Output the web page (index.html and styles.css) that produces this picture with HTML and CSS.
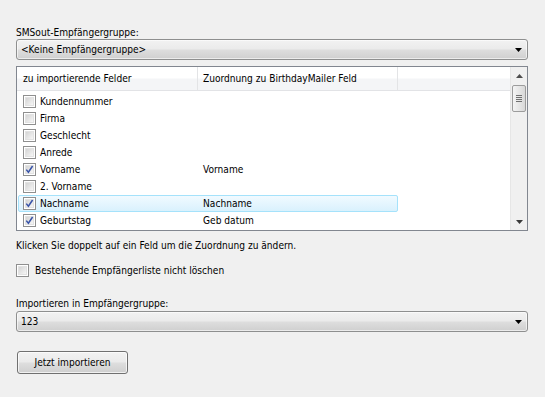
FILE: index.html
```html
<!DOCTYPE html>
<html>
<head>
<meta charset="utf-8">
<link rel="stylesheet" href="styles.css">
</head>
<body>
<div class="page">
  <div class="label first">SMSout-Empfängergruppe:</div>
  <div class="combo">
    <span class="combo-text">&lt;Keine Empfängergruppe&gt;</span>
    <svg class="combo-arrow" width="7" height="4" viewBox="0 0 7 4"><path d="M0 0H7L3.5 4Z" fill="#000"/></svg>
  </div>

  <div class="list">
    <div class="list-main">
      <div class="list-head">
        <div class="hcol c1">zu importierende Felder</div>
        <div class="hcol c2">Zuordnung zu BirthdayMailer Feld</div>
        <div class="hcol c3"></div>
      </div>
      <div class="rows">
        <div class="row"><div class="c1 cell"><span class="cb"></span>Kundennummer</div><div class="c2 cell"></div></div>
        <div class="row"><div class="c1 cell"><span class="cb"></span>Firma</div><div class="c2 cell"></div></div>
        <div class="row"><div class="c1 cell"><span class="cb"></span>Geschlecht</div><div class="c2 cell"></div></div>
        <div class="row"><div class="c1 cell"><span class="cb"></span>Anrede</div><div class="c2 cell"></div></div>
        <div class="row"><div class="c1 cell"><span class="cb checked"><svg width="9" height="9" viewBox="0 0 9 9"><path d="M1.3 4.6L3.4 7.2L7.6 1" fill="none" stroke="#3853a8" stroke-width="1.5"/></svg></span>Vorname</div><div class="c2 cell">Vorname</div></div>
        <div class="row"><div class="c1 cell"><span class="cb"></span>2. Vorname</div><div class="c2 cell"></div></div>
        <div class="row selected"><div class="c1 cell"><span class="cb checked"><svg width="9" height="9" viewBox="0 0 9 9"><path d="M1.3 4.6L3.4 7.2L7.6 1" fill="none" stroke="#3853a8" stroke-width="1.5"/></svg></span>Nachname</div><div class="c2 cell">Nachname</div></div>
        <div class="row"><div class="c1 cell"><span class="cb checked"><svg width="9" height="9" viewBox="0 0 9 9"><path d="M1.3 4.6L3.4 7.2L7.6 1" fill="none" stroke="#3853a8" stroke-width="1.5"/></svg></span>Geburtstag</div><div class="c2 cell">Geb datum</div></div>
      </div>
    </div>
    <div class="vscroll">
      <div class="sbtn"><svg width="7" height="4" viewBox="0 0 7 4"><path d="M3.5 0L7 4H0Z" fill="#4d4d4d"/></svg></div>
      <div class="thumb"><span class="grip"></span><span class="grip"></span><span class="grip"></span><span class="grip"></span></div>
      <div class="track"></div>
      <div class="sbtn"><svg width="7" height="4" viewBox="0 0 7 4"><path d="M0 0H7L3.5 4Z" fill="#3a3a3a"/></svg></div>
    </div>
  </div>

  <div class="hint">Klicken Sie doppelt auf ein Feld um die Zuordnung zu ändern.</div>

  <div class="check-line"><span class="cb"></span><span>Bestehende Empfängerliste nicht löschen</span></div>

  <div class="label second">Importieren in Empfängergruppe:</div>
  <div class="combo">
    <span class="combo-text">123</span>
    <svg class="combo-arrow" width="7" height="4" viewBox="0 0 7 4"><path d="M0 0H7L3.5 4Z" fill="#000"/></svg>
  </div>

  <div class="btn">Jetzt importieren</div>
</div>
</body>
</html>
```

FILE: styles.css
```css
* { box-sizing: border-box; }
html, body { margin: 0; padding: 0; }
body {
  background: #f0f0f0;
  font-family: "DejaVu Sans Condensed", "DejaVu Sans", sans-serif;
  font-size: 10.1px;
  color: #000;
  width: 545px;
  height: 397px;
  overflow: hidden;
}
.page {
  padding: 0 17px 0 16px;
}
.label {
  line-height: 13px;
  height: 13px;
}
.label.first { margin-top: 26px; }
.label.second { margin-top: 20px; margin-bottom: 1px; }

.combo {
  height: 21px;
  border: 1px solid #8e8f8f;
  border-radius: 3px;
  background: linear-gradient(#f2f2f2 0%, #ebebeb 45%, #dddddd 55%, #cfcfcf 100%);
  display: flex;
  align-items: center;
  justify-content: space-between;
  padding: 0 5px 0 4px;
  box-shadow: inset 0 0 0 1px rgba(255,255,255,0.6);
}
.combo-text { line-height: 13px; }
.combo-arrow { display: block; margin-top: 1px; }

.list {
  margin-top: 6px;
  height: 165px;
  border: 1px solid #828790;
  background: #fff;
  display: flex;
}
.list-main { flex: 1; display: flex; flex-direction: column; }
.list-head {
  height: 24px;
  display: flex;
  background: linear-gradient(#ffffff 0%, #ffffff 48%, #f4f5f7 52%, #f4f5f7 100%);
  border-bottom: 1px solid #e2e3e6;
}
.hcol {
  line-height: 23px;
  border-right: 1px solid #e3e4e6;
}
.hcol.c1 { padding-left: 6px; }
.hcol.c2 { padding-left: 5px; }
.hcol.c3 { border-right: none; flex: 1; }
.c1 { width: 181px; }
.c2 { width: 200px; }
.rows { padding-top: 2px; }
.row {
  height: 17px;
  display: flex;
  align-items: center;
  margin-left: 1px;
  width: 380px;
  border: 1px solid transparent;
  border-radius: 2px;
}
.row.selected {
  border-color: #a5e2fb;
  background: linear-gradient(#f1faff, #d9f1fd);
}
.cell { display: flex; align-items: center; line-height: 13px; }
.row .c1 { width: 180px; padding-left: 4px; }
.row .c2 { padding-left: 5px; }
.cb {
  width: 13px;
  height: 13px;
  border: 1px solid #8f8f8f;
  background: #fff;
  position: relative;
  display: inline-flex;
  align-items: center;
  justify-content: center;
  margin-right: 4px;
  flex: none;
}
.cb::before {
  content: "";
  position: absolute;
  left: 1px; top: 1px; right: 1px; bottom: 1px;
  background: linear-gradient(135deg, #d4d4d4, #f6f6f6);
  border: 1px solid #e2e2e2;
}
.cb svg { position: relative; display: block; }

.vscroll {
  width: 17px;
  display: flex;
  flex-direction: column;
  background: #f0f0f0;
  border-left: 1px solid #e6e6e6;
}
.sbtn {
  height: 17px;
  display: flex;
  align-items: center;
  justify-content: center;
}
.thumb {
  height: 27px;
  margin: 1px 1px 0 1px;
  border: 1px solid #9c9c9c;
  border-radius: 2px;
  background: linear-gradient(90deg, #f4f4f4, #e6e6e6 50%, #d8d8d8);
  display: flex;
  flex-direction: column;
  align-items: center;
  justify-content: center;
  gap: 1px;
}
.grip { width: 6px; height: 1px; background: #707070; }
.track { flex: 1; }

.hint {
  margin-top: 8px;
  line-height: 13px;
}
.check-line {
  margin-top: 11px;
  display: flex;
  align-items: center;
  height: 14px;
  line-height: 13px;
}
.check-line .cb { margin-right: 6px; }

.btn {
  margin-top: 19px;
  margin-left: 1px;
  width: 111px;
  height: 23px;
  border: 1px solid #707070;
  border-radius: 3px;
  background: linear-gradient(#f2f2f2 0%, #ebebeb 45%, #dddddd 55%, #cfcfcf 100%);
  box-shadow: inset 0 0 0 1px rgba(255,255,255,0.7);
  display: flex;
  align-items: center;
  justify-content: center;
  line-height: 13px;
}
```
